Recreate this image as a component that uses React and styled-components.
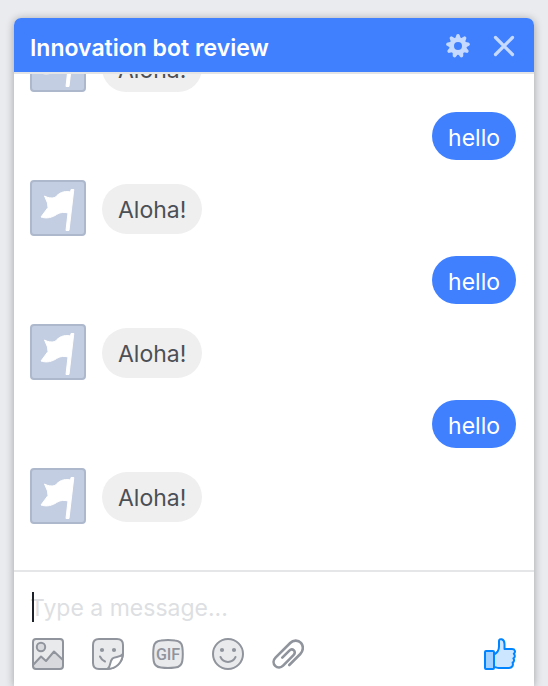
import React from "react";
import styled, { createGlobalStyle } from "styled-components";

const GlobalStyle = createGlobalStyle`
  * { box-sizing: border-box; }
  body {
    margin: 0;
    background: #e9ebee;
    font-family: Inter, "Liberation Sans", sans-serif;
  }
  button { font: inherit; }
`;

const Page = styled.main`
  height: 100vh;
  padding: 18px 14px 0;
  overflow: hidden;
`;

const ChatWindow = styled.section`
  display: flex;
  flex-direction: column;
  height: 100%;
  background: #fff;
  border-radius: 7px 7px 0 0;
  box-shadow: 0 1px 8px rgba(0, 0, 0, 0.32);
`;

const Header = styled.header`
  display: flex;
  flex: none;
  align-items: center;
  height: 56px;
  padding: 4px 18px 0 16px;
  background: #4080ff;
  background-clip: padding-box;
  border-bottom: 2px solid #e3e4e6;
  border-radius: 7px 7px 0 0;
`;

const Title = styled.h1`
  flex: 1;
  margin: 0;
  padding-top: 2px;
  color: #fff;
  font-size: 23px;
  font-weight: 600;
  line-height: 28px;
`;

const IconButton = styled.button`
  display: block;
  flex: none;
  padding: 0;
  border: 0;
  background: none;
  cursor: pointer;

  svg { display: block; }
`;

const HeaderActions = styled.div`
  display: flex;
  gap: 22px;
  padding-bottom: 2px;
`;

const Messages = styled.ol`
  display: flex;
  flex: 1;
  flex-direction: column;
  justify-content: flex-end;
  gap: 20px;
  min-height: 0;
  margin: 0;
  padding: 0 18px 46px 16px;
  overflow: hidden;
  list-style: none;
`;

const MessageRow = styled.li`
  display: flex;
  flex: none;
  align-items: flex-end;
  justify-content: ${(p) => (p.$own ? "flex-end" : "flex-start")};
  gap: 16px;
`;

const Avatar = styled.span`
  flex: none;
  width: 56px;
  height: 56px;
  background: #c4cee2;
  border: 2px solid #adb8cd;
  border-radius: 4px;

  svg { display: block; }
`;

const Bubble = styled.p`
  margin: 0;
  margin-bottom: ${(p) => (p.$own || p.$grouped ? "0" : "2px")};
  padding: ${(p) => (p.$own || p.$grouped ? "11px 16px 7px" : "11px 16px 9px")};
  border-radius: 25px;
  background: ${(p) => (p.$own ? "#4080ff" : "#efefef")};
  color: ${(p) => (p.$own ? "#fff" : "#4b4f56")};
  font-size: 23px;
  font-weight: 400;
  line-height: 30px;
`;

const Composer = styled.form`
  flex: none;
  padding: 20px 18px 16px 16px;
  border-top: 2px solid #e5e6e7;
`;

const InputWrap = styled.div`
  position: relative;
  height: 30px;
`;

const MessageInput = styled.input`
  display: block;
  width: 100%;
  height: 30px;
  padding: 2px 0 0;
  border: 0;
  outline: 0;
  background: none;
  color: #1d2129;
  font: 400 23px/28px Inter, "Liberation Sans", sans-serif;

  &::placeholder { color: #dddfe3; opacity: 1; }
`;

const Caret = styled.span`
  position: absolute;
  top: 0;
  left: 2px;
  width: 2px;
  height: 30px;
  background: #1d2129;
`;

const Toolbar = styled.div`
  display: flex;
  gap: 28px;
  padding: 16px 0 0 2px;

  > :last-child { margin-left: auto; }
`;

const GifLabel = styled.text`
  fill: #90949c;
  font: 500 16px Roboto, sans-serif;
  text-anchor: middle;
`;

const line = {
  fill: "none",
  stroke: "#90949c",
  strokeWidth: 2,
  strokeLinecap: "round",
  strokeLinejoin: "round",
};

function GearIcon() {
  const teeth = Array.from({ length: 9 }, (_, i) => i * 40);
  return (
    <svg width="24" height="24" viewBox="0 0 24 24" aria-hidden="true">
      <g fill="#c6d9ff">
        {teeth.map((a) => (
          <path key={a} d="M9 5 10.300 1.200Q10.600 0 12 0T13.700 1.200L15 5Z" transform={`rotate(${a} 12 12)`} />
        ))}
      </g>
      <circle cx="12" cy="12" r="6.400" fill="none" stroke="#c6d9ff" strokeWidth="4.800" />
    </svg>
  );
}

function CloseIcon() {
  return (
    <svg width="24" height="24" viewBox="0 0 24 24" aria-hidden="true">
      <path d="M3.500 3.500l17 17M20.500 3.500l-17 17" stroke="#c6d9ff" strokeWidth="3.200" strokeLinecap="round" />
    </svg>
  );
}

function FlagIcon() {
  return (
    <svg width="52" height="52" viewBox="0 0 52 52" aria-hidden="true">
      <path
        fill="#fff"
        stroke="#fff"
        strokeWidth="1"
        strokeLinejoin="round"
        d="M39 7.500h2.800L37 48.500h-3L36 31C30 29.500 27 31 23 33.500c-5 2.700-9.500 3-14 1.500L16 25.500 15.500 21 12.500 14c3.500 2 7 2.500 10.500 1.500 4-4.500 8.500-7 15.500-5.500Z"
      />
    </svg>
  );
}

function PhotoIcon() {
  return (
    <svg width="32" height="32" viewBox="0 0 32 32" aria-hidden="true">
      <path d="M1 27 9 19l5 4 8-9 9 8v6q0 3-3 3H4q-3 0-3-3Z" fill="#d7d9dc" />
      <path d="M1 27 9 19l5 4 8-9 9 8V4q0-3-3-3H4Q1 1 1 4Z" fill="#e9eaec" />
      <path d="M1.500 26.500 9 18.500l5 4.500 8-9.500 9 8.500" {...line} />
      <circle cx="9" cy="9" r="4.200" {...line} fill="#d7d9dc" />
      <rect x="1" y="1" width="30" height="30" rx="3" {...line} />
    </svg>
  );
}

function StickerIcon() {
  return (
    <svg width="32" height="32" viewBox="0 0 32 32" aria-hidden="true">
      <path d="M7 1h18q6 0 6 6v8C31 24 24 31 15 31H7q-6 0-6-6V7q0-6 6-6Z" {...line} fill="#e9eaec" />
      <path d="M15.500 31c4-3 1.500-7 5-10.500 3-2.500 7.500-.5 10.300-4.500C30.500 24.500 24 30.800 15.500 31Z" {...line} fill="#fff" />
      <circle cx="10" cy="12" r="2.100" fill="#90949c" />
      <circle cx="22" cy="12" r="2.100" fill="#90949c" />
      <path d="M8 18.500q1.500 3.500 5 5" {...line} />
    </svg>
  );
}

function GifIcon() {
  return (
    <svg width="32" height="32" viewBox="0 0 32 32" aria-hidden="true">
      <path d="M9 2.500q7-1 14 0 6.500.5 7.300 6.500 1 7 0 14-.8 6-7.300 6.500-7 1-14 0Q2.500 29 1.700 23q-1-7 0-14Q2.500 3 9 2.500Z" {...line} fill="#e9eaec" />
      <GifLabel x="16" y="22">GIF</GifLabel>
    </svg>
  );
}

function SmileIcon() {
  return (
    <svg width="32" height="32" viewBox="0 0 32 32" aria-hidden="true">
      <circle cx="16" cy="16" r="15" {...line} fill="#e9eaec" />
      <circle cx="10" cy="12" r="2.100" fill="#90949c" />
      <circle cx="22" cy="12" r="2.100" fill="#90949c" />
      <path d="M8.500 19c3 6.500 12 6.500 15 0" {...line} />
    </svg>
  );
}

function ClipIcon() {
  return (
    <svg width="32" height="32" viewBox="0 0 32 32" aria-hidden="true">
      <path
        d="M17.300 27 28.300 16c3.200-3.200 3.300-8.200.7-11.200-2.900-3-7.800-2.800-10.800.2L3.500 19.700c-2.500 2.500-2.500 5.900-.3 8.200 2.300 2.200 5.600 2 7.900-.3L21.500 17.200c1.600-1.600 1.600-3.600.4-4.800s-3.200-1.200-4.800.4L10.300 19.600"
        {...line}
        strokeWidth="2.600"
      />
    </svg>
  );
}

function LikeIcon() {
  return (
    <svg width="32" height="32" viewBox="0 0 32 32" aria-hidden="true">
      <g stroke="#0084ff" strokeWidth="2" strokeLinejoin="round">
        <path
          d="M10 16.500c3-1.500 5-4.500 5-8V3c0-3 5.500-2.500 5.500 3v5h7.500c3.200 0 3.800 3.200 1.800 4.700 1.600 1.600 1.200 3.800-.4 4.700 1.200 1.600.7 3.400-.8 4.300 1 2.800-.6 5.300-3.600 5.300H15c-2.500 0-3.500-1-5-1Z"
          fill="#cce6ff"
        />
        <rect x="1" y="13" width="9" height="18" rx="1" fill="#a3d1ff" />
      </g>
    </svg>
  );
}

const messages = [
  { id: 1, text: "Aloha!", grouped: true },
  { id: 2, text: "hello", own: true },
  { id: 3, text: "Aloha!" },
  { id: 4, text: "hello", own: true },
  { id: 5, text: "Aloha!" },
  { id: 6, text: "hello", own: true },
  { id: 7, text: "Aloha!" },
];

const tools = [
  { label: "Add photo", Icon: PhotoIcon },
  { label: "Choose a sticker", Icon: StickerIcon },
  { label: "Choose a GIF", Icon: GifIcon },
  { label: "Choose an emoji", Icon: SmileIcon },
  { label: "Attach a file", Icon: ClipIcon },
  { label: "Send a like", Icon: LikeIcon },
];

export default function App() {
  return (
    <>
      <GlobalStyle />
      <Page>
        <ChatWindow>
          <Header>
            <Title>Innovation bot review</Title>
            <HeaderActions>
              <IconButton type="button" aria-label="Options"><GearIcon /></IconButton>
              <IconButton type="button" aria-label="Close"><CloseIcon /></IconButton>
            </HeaderActions>
          </Header>
          <Messages>
            {messages.map((m) => (
              <MessageRow key={m.id} $own={m.own}>
                {!m.own && <Avatar><FlagIcon /></Avatar>}
                <Bubble $own={m.own} $grouped={m.grouped}>{m.text}</Bubble>
              </MessageRow>
            ))}
          </Messages>
          <Composer onSubmit={(e) => e.preventDefault()}>
            <InputWrap>
              <MessageInput type="text" aria-label="Message" placeholder="Type a message..." />
              <Caret />
            </InputWrap>
            <Toolbar>
              {tools.map(({ label, Icon }) => (
                <IconButton key={label} type="button" aria-label={label}><Icon /></IconButton>
              ))}
            </Toolbar>
          </Composer>
        </ChatWindow>
      </Page>
    </>
  );
}
